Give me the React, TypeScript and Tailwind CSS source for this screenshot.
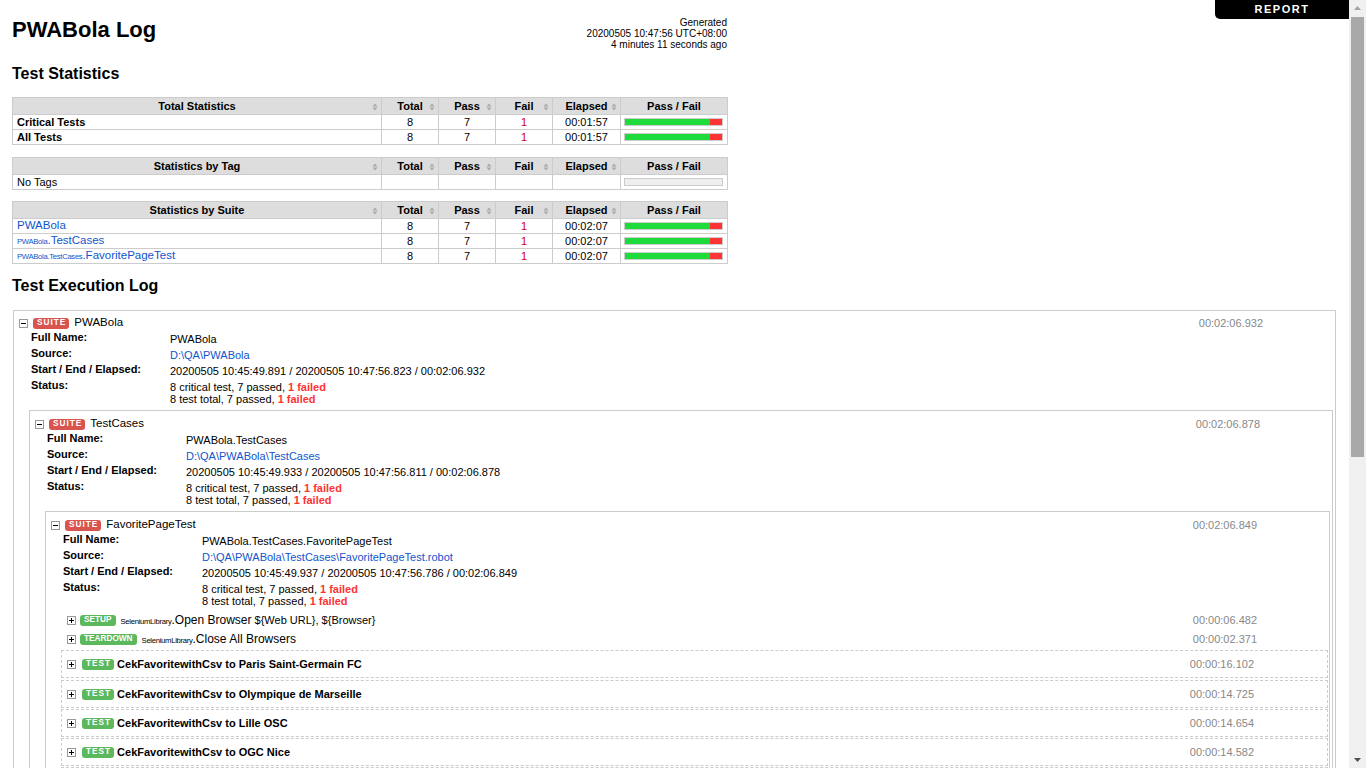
import React from "react";

const FONT = "font-['Liberation_Sans',Arial,Helvetica,sans-serif]";

function Toggle({ open }: { open: boolean }) {
  return (
    <svg width="9" height="9" viewBox="0 0 9 9" className="shrink-0 block">
      <rect x="0.5" y="0.5" width="8" height="8" fill="#fff" stroke="#999" />
      <path d="M2 4.5H7" stroke="#000" strokeWidth="1" />
      {!open && <path d="M4.5 2V7" stroke="#000" strokeWidth="1" />}
    </svg>
  );
}

function SuiteLabel() {
  return (
    <span className="inline-flex items-center h-[11px] pl-[4px] pr-[3px] rounded-[3px] bg-[#d9534f] text-white font-bold text-[8.25px] leading-none tracking-[1px]">
      SUITE
    </span>
  );
}

function TestLabel() {
  return (
    <span className="inline-flex items-center h-[11px] pl-[4px] pr-[3px] rounded-[3px] bg-[#5cb85c] text-white font-bold text-[8.25px] leading-none tracking-[1px]">
      TEST
    </span>
  );
}

function KwLabel({ text }: { text: string }) {
  return (
    <span className="inline-flex items-center h-[11px] px-[4px] rounded-[3px] bg-[#5cb85c] text-white font-bold text-[8.25px] leading-none">
      {text}
    </span>
  );
}

function SortIcon() {
  return (
    <svg width="6" height="8" viewBox="0 0 6 8" className="absolute right-[3px] top-[5px]">
      <path d="M0.5 3.5 L3 0.5 L5.5 3.5 Z" fill="#aaa" />
      <path d="M0.5 4.5 L3 7.5 L5.5 4.5 Z" fill="#aaa" />
    </svg>
  );
}

function Bar({ pass, total }: { pass: number; total: number }) {
  return (
    <div className="ml-[3px] w-[99px] h-[8px] border border-[#ccc] bg-[#eee] flex">
      {total > 0 && (
        <>
          <div className="h-full bg-[#1edb3c]" style={{ width: `${(pass / total) * 100}%` }} />
          <div className="h-full flex-1 bg-[#ff3333]" />
        </>
      )}
    </div>
  );
}

const GRID = "grid grid-cols-[369px_57px_57px_57px_68px_107px]";

function HeadRow({ title }: { title: string }) {
  const th = "relative h-[17px] border-r border-b border-[#ccc] bg-[#ddd] font-bold flex items-center justify-center";
  return (
    <>
      <div className={th}>
        {title}
        <SortIcon />
      </div>
      <div className={th}>
        Total
        <SortIcon />
      </div>
      <div className={th}>
        Pass
        <SortIcon />
      </div>
      <div className={th}>
        Fail
        <SortIcon />
      </div>
      <div className={th}>
        Elapsed
        <SortIcon />
      </div>
      <div className={th}>Pass / Fail</div>
    </>
  );
}

type Row = {
  name: React.ReactNode;
  bold?: boolean;
  total?: string;
  pass?: string;
  fail?: string;
  elapsed?: string;
  p: number;
  t: number;
};

function BodyRow({ r }: { r: Row }) {
  const td = "h-[15px] border-r border-b border-[#ccc] flex items-center justify-center";
  return (
    <>
      <div className={`h-[15px] border-r border-b border-[#ccc] flex items-center pl-[4px] whitespace-nowrap ${r.bold ? "font-bold" : ""}`}>
        {r.name}
      </div>
      <div className={td}>{r.total}</div>
      <div className={td}>{r.pass}</div>
      <div className={`${td} text-[#c00]`}>{r.fail}</div>
      <div className={td}>{r.elapsed}</div>
      <div className="h-[15px] border-r border-b border-[#ccc] flex items-center">
        <Bar pass={r.p} total={r.t} />
      </div>
    </>
  );
}

function StatTable({ title, rows, className }: { title: string; rows: Row[]; className: string }) {
  return (
    <div className={`${GRID} w-[716px] border-l border-t border-[#ccc] ${className}`}>
      <HeadRow title={title} />
      {rows.map((r, i) => (
        <BodyRow key={i} r={r} />
      ))}
    </div>
  );
}

function Small({ children }: { children: React.ReactNode }) {
  return <span className="text-[7.7px] tracking-[-0.04em]">{children}</span>;
}

function MetaRow({ label, children }: { label: string; children: React.ReactNode }) {
  return (
    <div className="flex">
      <div className="w-[139px] shrink-0 font-bold leading-[13px]">{label}</div>
      <div className="pt-[2px] pb-[2px] leading-[12px]">{children}</div>
    </div>
  );
}

function Status() {
  return (
    <>
      <div>
        8 critical test, 7 passed, <span className="text-[#f33] font-bold">1 failed</span>
      </div>
      <div>
        8 test total, 7 passed, <span className="text-[#f33] font-bold">1 failed</span>
      </div>
    </>
  );
}

function SuiteHead({ name, elapsed, top }: { name: string; elapsed: string; top: string }) {
  return (
    <div className={`flex items-center h-[16px] pl-[5px] pr-[72px] ${top}`}>
      <Toggle open />
      <span className="ml-[5px] flex">
        <SuiteLabel />
      </span>
      <span className="ml-[5px] text-[11.5px]">{name}</span>
      <span className="ml-auto text-[#888]">{elapsed}</span>
    </div>
  );
}

function Meta({ fullName, source, times }: { fullName: string; source: string; times: string }) {
  return (
    <div className="pl-[17px]">
      <MetaRow label="Full Name:">{fullName}</MetaRow>
      <MetaRow label="Source:">
        <a className="text-[#15c]">{source}</a>
      </MetaRow>
      <MetaRow label="Start / End / Elapsed:">{times}</MetaRow>
      <MetaRow label="Status:">
        <Status />
      </MetaRow>
    </div>
  );
}

function KeywordRow({ label, lib, name, args, elapsed, cls }: { label: string; lib: string; name: string; args?: string; elapsed: string; cls: string }) {
  return (
    <div className={`h-[18px] flex items-center pl-[6px] pr-[71px] ${cls}`}>
      <Toggle open={false} />
      <span className="ml-[4px] flex">
        <KwLabel text={label} />
      </span>
      <span className="ml-[5px] whitespace-nowrap">
        <Small>{lib}</Small>
        <span className="text-[12px]">.{name}</span>
        {args && <span> {args}</span>}
      </span>
      <span className="ml-auto text-[#888]">{elapsed}</span>
    </div>
  );
}

function TestRow({ name, elapsed, cls }: { name: string; elapsed: string; cls: string }) {
  return (
    <div className={`h-[28px] border border-dashed border-[#ccc] flex items-center pl-[5px] pr-[73px] ${cls}`}>
      <Toggle open={false} />
      <span className="ml-[6px] flex">
        <TestLabel />
      </span>
      <span className="ml-[3px] font-bold">{name}</span>
      <span className="ml-auto text-[#888]">{elapsed}</span>
    </div>
  );
}

function FakeScrollbar() {
  return (
    <div className="fixed top-0 right-0 w-[17px] h-screen bg-[#f0f0f0] z-20">
      <svg width="17" height="17" viewBox="0 0 17 17" className="absolute top-0 left-0">
        <path d="M5 10 L8.5 6 L12 10 Z" fill="#a3a3a3" />
      </svg>
      <div className="absolute top-[17px] left-[2px] w-[13px] h-[440px] bg-[#a8a8a8]" />
      <svg width="17" height="17" viewBox="0 0 17 17" className="absolute bottom-0 left-0">
        <path d="M5 7 L8.5 11 L12 7 Z" fill="#505050" />
      </svg>
    </div>
  );
}

const tests = [
  { name: "CekFavoritewithCsv to Paris Saint-Germain FC", elapsed: "00:00:16.102" },
  { name: "CekFavoritewithCsv to Olympique de Marseille", elapsed: "00:00:14.725" },
  { name: "CekFavoritewithCsv to Lille OSC", elapsed: "00:00:14.654" },
  { name: "CekFavoritewithCsv to OGC Nice", elapsed: "00:00:14.582" },
  { name: "CekFavoritewithCsv to Stade Rennais FC", elapsed: "00:00:14.601" },
  { name: "CekFavoritewithCsv to Olympique Lyonnais", elapsed: "00:00:14.633" },
  { name: "CekFavoritewithCsv to Montpellier HSC", elapsed: "00:00:14.590" },
  { name: "CekFavoritewithCsv to Stade de Reims", elapsed: "00:00:14.612" },
];

export default function App() {
  const totalRows: Row[] = [
    { name: "Critical Tests", bold: true, total: "8", pass: "7", fail: "1", elapsed: "00:01:57", p: 7, t: 8 },
    { name: "All Tests", bold: true, total: "8", pass: "7", fail: "1", elapsed: "00:01:57", p: 7, t: 8 },
  ];
  const tagRows: Row[] = [{ name: "No Tags", p: 0, t: 0 }];
  const suiteRows: Row[] = [
    { name: <a className="text-[#15c] text-[11.5px]">PWABola</a>, total: "8", pass: "7", fail: "1", elapsed: "00:02:07", p: 7, t: 8 },
    {
      name: (
        <a className="text-[#15c] text-[11.5px]">
          <Small>PWABola</Small>.TestCases
        </a>
      ),
      total: "8",
      pass: "7",
      fail: "1",
      elapsed: "00:02:07",
      p: 7,
      t: 8,
    },
    {
      name: (
        <a className="text-[#15c] text-[11.5px]">
          <Small>PWABola.TestCases</Small>.FavoritePageTest
        </a>
      ),
      total: "8",
      pass: "7",
      fail: "1",
      elapsed: "00:02:07",
      p: 7,
      t: 8,
    },
  ];

  return (
    <div className={`${FONT} text-[11px] text-black bg-white min-h-screen pb-[20px] mr-[17px]`}>
      <FakeScrollbar />
      <a className="fixed top-0 right-[17px] w-[134px] h-[19px] bg-black text-white font-bold text-[11px] tracking-[1.5px] flex items-center justify-center rounded-bl-[5px] z-10">
        REPORT
      </a>
      <div className="pl-[12px]">
        <div className="w-[715px] h-[50px] flex justify-between items-start">
          <h1 className="mt-[17px] text-[22px] leading-[26px] font-bold">PWABola Log</h1>
          <div className="mt-[17px] text-[10px] leading-[11px] text-right">
            <div>Generated</div>
            <div>20200505 10:47:56 UTC+08:00</div>
            <div>4 minutes 11 seconds ago</div>
          </div>
        </div>
        <h2 className="mt-[15px] text-[16px] leading-[18px] font-bold">Test Statistics</h2>
        <StatTable title="Total Statistics" rows={totalRows} className="mt-[14px]" />
        <StatTable title="Statistics by Tag" rows={tagRows} className="mt-[12px]" />
        <StatTable title="Statistics by Suite" rows={suiteRows} className="mt-[11px]" />
        <h2 className="mt-[13px] text-[16px] leading-[18px] font-bold">Test Execution Log</h2>
      </div>

      <div className="ml-[13px] mr-[13px] mt-[15px] border border-[#ccc] pb-[6px]">
        <SuiteHead name="PWABola" elapsed="00:02:06.932" top="mt-[4px]" />
        <Meta fullName="PWABola" source="D:\QA\PWABola" times="20200505 10:45:49.891 / 20200505 10:47:56.823 / 00:02:06.932" />
        <div className="pl-[15px] pr-[2px] mt-[3px]">
          <div className="border border-[#ccc] pb-[6px]">
            <SuiteHead name="TestCases" elapsed="00:02:06.878" top="mt-[5px]" />
            <Meta
              fullName="PWABola.TestCases"
              source="D:\QA\PWABola\TestCases"
              times="20200505 10:45:49.933 / 20200505 10:47:56.811 / 00:02:06.878"
            />
            <div className="pl-[15px] pr-[2px] mt-[3px]">
              <div className="border border-[#ccc] pb-[6px]">
                <SuiteHead name="FavoritePageTest" elapsed="00:02:06.849" top="mt-[5px]" />
                <Meta
                  fullName="PWABola.TestCases.FavoritePageTest"
                  source="D:\QA\PWABola\TestCases\FavoritePageTest.robot"
                  times="20200505 10:45:49.937 / 20200505 10:47:56.786 / 00:02:06.849"
                />
                <div className="pl-[15px] pr-[1px] mt-[2px]">
                  <KeywordRow
                    label="SETUP"
                    lib="SeleniumLibrary"
                    name="Open Browser"
                    args="${Web URL}, ${Browser}"
                    elapsed="00:00:06.482"
                    cls=""
                  />
                  <KeywordRow
                    label="TEARDOWN"
                    lib="SeleniumLibrary"
                    name="Close All Browsers"
                    elapsed="00:00:02.371"
                    cls="mt-[1px]"
                  />
                  {tests.map((t, i) => (
                    <TestRow key={i} name={t.name} elapsed={t.elapsed} cls={i < 2 ? "mt-[2px]" : "mt-[1px]"} />
                  ))}
                </div>
              </div>
            </div>
          </div>
        </div>
      </div>
    </div>
  );
}
